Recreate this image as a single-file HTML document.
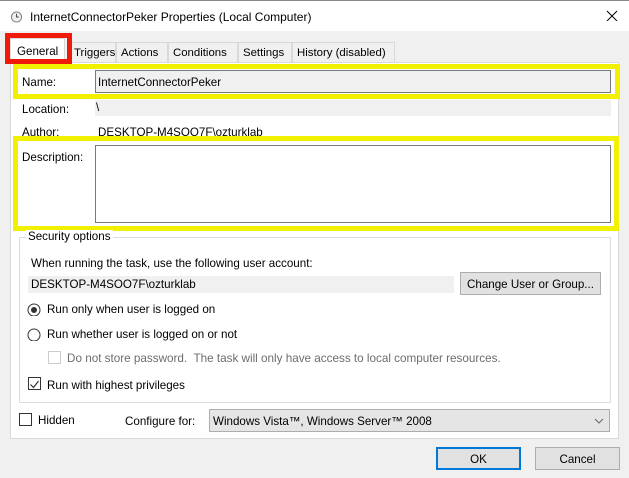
<!DOCTYPE html>
<html><head><style>
*{box-sizing:border-box;margin:0;padding:0}
body{width:629px;height:478px;background:#f0f0f0;font-family:"Liberation Sans",sans-serif;font-size:11.6px;color:#000;position:relative;overflow:hidden}
.a{position:absolute;white-space:nowrap;padding-top:1px}
.tab{position:absolute;top:42px;height:20px;border:1px solid #d9d9d9;border-bottom:none;background:#f0f0f0;padding:4px 0 0 4px;white-space:nowrap;overflow:hidden;font-size:11.4px}
</style></head><body>
<div class="a" style="left:0;top:0;width:629px;height:31px;background:#fff;border-top:1px solid #888"></div>
<svg class="a" style="left:10px;top:10px" width="13" height="13" viewBox="0 0 13 13"><circle cx="6.5" cy="6.5" r="5.5" fill="#eee" stroke="#777"/><path d="M6.5 3v3.5h2.5" stroke="#444" fill="none"/></svg>
<div class="a" style="left:30px;top:9px;font-size:12px">InternetConnectorPeker Properties (Local Computer)</div>
<svg class="a" style="left:606px;top:9px" width="12" height="12"><path d="M1 1l10 10M11 1L1 11" stroke="#000" stroke-width="1"/></svg>

<div class="a" style="left:10px;top:62px;width:609px;height:377px;background:#fff;border:1px solid #d9d9d9"></div>
<div class="tab" style="left:69px;width:47px">Triggers</div>
<div class="tab" style="left:116px;width:52px">Actions</div>
<div class="tab" style="left:168px;width:70px">Conditions</div>
<div class="tab" style="left:238px;width:54px">Settings</div>
<div class="tab" style="left:292px;width:103px">History (disabled)</div>
<div class="a" style="left:10px;top:38px;width:55px;height:25px;background:#fff;border:1px solid #d9d9d9;border-bottom:none;padding:6px 0 0 6px">General</div>
<div class="a" style="left:5px;top:33px;width:67px;height:31px;border:5px solid #f01a0a"></div>

<div class="a" style="left:95px;top:70px;width:516px;height:23px;background:#f0f0f0;border:1px solid #7a7a7a;padding:5px 0 0 2px">InternetConnectorPeker</div>
<div class="a" style="left:13px;top:64px;width:607px;height:35px;border:5px solid #f0f000"></div>
<div class="a" style="left:22px;top:75px">Name:</div>
<div class="a" style="left:22px;top:102px">Location:</div>
<div class="a" style="left:95px;top:100px;width:516px;height:16px;background:#f0f0f0;padding:1px 0 0 1px">\</div>
<div class="a" style="left:22px;top:125px">Author:</div>
<div class="a" style="left:98px;top:125px">DESKTOP-M4SOO7F\ozturklab</div>
<div class="a" style="left:95px;top:145px;width:516px;height:78px;background:#fff;border:1px solid #7a7a7a"></div>
<div class="a" style="left:13px;top:136px;width:606px;height:95px;border:5px solid #f0f000"></div>
<div class="a" style="left:22px;top:150px">Description:</div>

<div class="a" style="left:19px;top:237px;width:592px;height:166px;border:1px solid #dcdcdc"></div>
<div class="a" style="left:26px;top:230px;background:#fff;padding:0 2px">Security options</div>
<div class="a" style="left:31px;top:256px">When running the task, use the following user account:</div>
<div class="a" style="left:28px;top:276px;width:426px;height:17px;background:#f0f0f0;padding:2px 0 0 3px">DESKTOP-M4SOO7F\ozturklab</div>
<div class="a" style="left:460px;top:272px;width:141px;height:23px;background:#e1e1e1;border:1px solid #adadad;text-align:center;padding-top:5px">Change User or Group...</div>
<svg class="a" style="left:27px;top:302px" width="14" height="14"><circle cx="7" cy="7" r="6" fill="#fff" stroke="#333"/><circle cx="7" cy="7" r="3" fill="#333"/></svg>
<div class="a" style="left:47px;top:302px">Run only when user is logged on</div>
<svg class="a" style="left:27px;top:327px" width="14" height="14"><circle cx="7" cy="7" r="6" fill="#fff" stroke="#333"/></svg>
<div class="a" style="left:47px;top:327px">Run whether user is logged on or not</div>
<div class="a" style="left:48px;top:351px;width:13px;height:13px;border:1px solid #ccc"></div>
<div class="a" style="left:67px;top:351px;color:#6d6d6d;font-size:11.7px">Do not store password.&nbsp; The task will only have access to local computer resources.</div>
<div class="a" style="left:28px;top:377px;width:13px;height:13px;border:1px solid #333"></div>
<svg class="a" style="left:29px;top:378px" width="11" height="11"><path d="M1.5 5.5l3 3 5-6.5" stroke="#333" fill="none" stroke-width="1.2"/></svg>
<div class="a" style="left:47px;top:378px">Run with highest privileges</div>

<div class="a" style="left:19px;top:413px;width:13px;height:13px;border:1px solid #333;background:#fff"></div>
<div class="a" style="left:38px;top:413px">Hidden</div>
<div class="a" style="left:125px;top:414px">Configure for:</div>
<div class="a" style="left:209px;top:409px;width:401px;height:23px;background:#e5e5e5;border:1px solid #adadad;padding:5px 0 0 3px">Windows Vista™, Windows Server™ 2008</div>
<svg class="a" style="left:594px;top:417px" width="10" height="7"><path d="M1 1l4 4 4-4" stroke="#666" fill="none"/></svg>

<div class="a" style="left:436px;top:447px;width:85px;height:23px;background:#e1e1e1;border:2px solid #0078d7;text-align:center;padding-top:4px">OK</div>
<div class="a" style="left:535px;top:447px;width:85px;height:23px;background:#e1e1e1;border:1px solid #adadad;text-align:center;padding-top:5px">Cancel</div>
</body></html>
